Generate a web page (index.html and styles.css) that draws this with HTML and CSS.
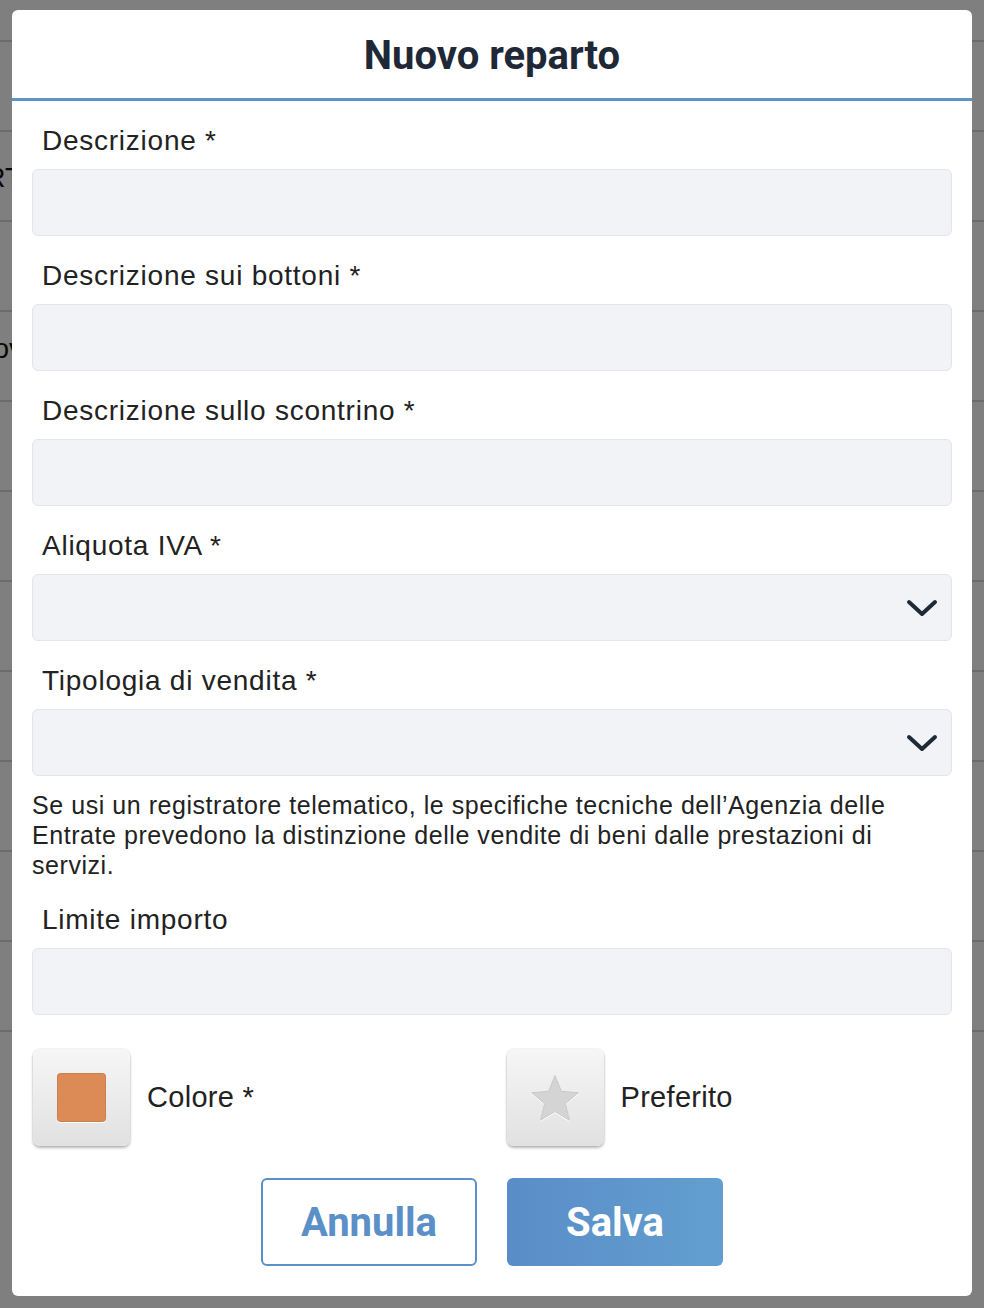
FILE: index.html
```html
<!DOCTYPE html>
<html lang="it">
<head>
<meta charset="utf-8">
<title>Nuovo reparto</title>
<link rel="stylesheet" href="styles.css">
</head>
<body>
<div class="page">
  <div class="page-head"></div>
  <div class="page-row"></div>
  <div class="page-row"><div class="cell cell-rt"><span>REPORT</span></div></div>
  <div class="page-row"></div>
  <div class="page-row"><div class="cell cell-ov"><span>Nuov</span></div></div>
  <div class="page-row"></div>
  <div class="page-row"></div>
  <div class="page-row"></div>
  <div class="page-row"></div>
  <div class="page-row"></div>
  <div class="page-row"></div>
  <div class="page-row"></div>
</div>

<div class="overlay">
  <div class="modal">
    <div class="modal-head"><h1 class="modal-title">Nuovo reparto</h1></div>
    <div class="modal-body">
      <div class="field">
        <label class="label">Descrizione *</label>
        <div class="input"></div>
      </div>
      <div class="field">
        <label class="label">Descrizione sui bottoni *</label>
        <div class="input"></div>
      </div>
      <div class="field">
        <label class="label">Descrizione sullo scontrino *</label>
        <div class="input"></div>
      </div>
      <div class="field">
        <label class="label">Aliquota IVA *</label>
        <div class="input select">
          <svg class="chevron" width="32" height="18" viewBox="0 0 32 18"><polyline points="3,3 16,15 29,3" fill="none" stroke="#1f2a37" stroke-width="4" stroke-linecap="round" stroke-linejoin="round"/></svg>
        </div>
      </div>
      <div class="field">
        <label class="label">Tipologia di vendita *</label>
        <div class="input select">
          <svg class="chevron" width="32" height="18" viewBox="0 0 32 18"><polyline points="3,3 16,15 29,3" fill="none" stroke="#1f2a37" stroke-width="4" stroke-linecap="round" stroke-linejoin="round"/></svg>
        </div>
      </div>
      <p class="help">Se usi un registratore telematico, le specifiche tecniche dell’Agenzia delle Entrate prevedono la distinzione delle vendite di beni dalle prestazioni di servizi.</p>
      <div class="field">
        <label class="label">Limite importo</label>
        <div class="input"></div>
      </div>
      <div class="options">
        <div class="option">
          <div class="opt-btn"><span class="swatch"></span></div>
          <span class="opt-label">Colore *</span>
        </div>
        <div class="option">
          <div class="opt-btn">
            <svg class="star" width="50" height="50" viewBox="0 0 48 48"><path d="M24 2.5 L30.2 17.6 L46.5 18.9 L34.1 29.6 L37.9 45.5 L24 37 L10.1 45.5 L13.9 29.6 L1.5 18.9 L17.8 17.6 Z" fill="#d4d4d4" stroke="#c4c4c4" stroke-width="0.8" stroke-linejoin="round"/></svg>
          </div>
          <span class="opt-label">Preferito</span>
        </div>
      </div>
      <div class="actions">
        <button class="btn btn-outline">Annulla</button>
        <button class="btn btn-primary">Salva</button>
      </div>
    </div>
  </div>
</div>
</body>
</html>
```

FILE: styles.css
```css
* { box-sizing: border-box; }

html, body {
  margin: 0;
  padding: 0;
}

body {
  background: #ffffff;
  font-family: "Liberation Sans", Arial, sans-serif;
  color: #222222;
  overflow: hidden;
  height: 1308px;
}

/* underlying page */
.page {
  display: flex;
  flex-direction: column;
}
.page-head {
  height: 42px;
  border-bottom: 2px solid #d6d6d6;
}
.page-row {
  height: 90px;
  border-bottom: 2px solid #d6d6d6;
  display: flex;
  align-items: center;
}
.cell {
  display: flex;
  justify-content: flex-end;
  white-space: nowrap;
  color: #111;
  font-size: 28px;
}
.cell-rt { width: 22px; padding-top: 4px; }
.cell-ov { width: 23px; margin-top: -14px; }

/* overlay + modal */
.overlay {
  position: fixed;
  inset: 0;
  background: rgba(0, 0, 0, 0.5);
  padding: 10px 12px 12px 12px;
}
.modal {
  background: #ffffff;
  border-radius: 6px;
  height: 1286px;
  display: flex;
  flex-direction: column;
}
.modal-head {
  height: 91px;
  padding-top: 4px;
  border-bottom: 3px solid #5b95ca;
  display: flex;
  align-items: center;
  justify-content: center;
}
.modal-title {
  margin: 0;
  font-family: Roboto, "Liberation Sans", sans-serif;
  font-weight: 700;
  font-size: 40px;
  color: #1e2836;
  line-height: 1;
}

.modal-body {
  padding: 0 20px 30px 20px;
  display: flex;
  flex-direction: column;
}

.field {
  display: flex;
  flex-direction: column;
}
.label {
  display: block;
  padding: 25px 0 0 10px;
  margin-bottom: 13px;
  font-size: 28px;
  letter-spacing: 0.75px;
  line-height: 30px;
  color: #222;
}
.input {
  height: 67px;
  background: #f2f3f7;
  border: 1px solid #e3e5ea;
  border-radius: 6px;
}
.select {
  display: flex;
  align-items: center;
  justify-content: flex-end;
  padding-right: 13px;
}
.chevron { display: block; }

.help {
  margin: 14px 0 0 0;
  font-size: 25px;
  letter-spacing: 0.55px;
  line-height: 30px;
  color: #222;
}

.options {
  margin-top: 34px;
  display: grid;
  grid-template-columns: 1fr 1fr;
  column-gap: 27px;
}
.option {
  display: flex;
  align-items: center;
  gap: 17px;
}
.opt-btn {
  width: 97px;
  height: 97px;
  margin-left: 1px;
  border-radius: 7px;
  background: linear-gradient(#f6f6f6, #e1e1e1);
  box-shadow: 0 2px 3px rgba(0, 0, 0, 0.28), 0 0 0 1px rgba(0, 0, 0, 0.04);
  display: flex;
  align-items: center;
  justify-content: center;
}
.swatch {
  width: 49px;
  height: 49px;
  background: #dc8a56;
  border-radius: 4px;
  border: 1px solid rgba(0, 0, 0, 0.08);
  box-shadow: 0 1px 0 #ffffff;
}
.star {
  display: block;
  filter: drop-shadow(0 1px 0 #ffffff);
}
.opt-label {
  font-size: 29px;
  letter-spacing: 0.3px;
  color: #222;
}

.actions {
  margin-top: 32px;
  display: flex;
  justify-content: center;
  gap: 30px;
}
.btn {
  width: 216px;
  height: 88px;
  border-radius: 6px;
  font-family: Roboto, "Liberation Sans", sans-serif;
  font-weight: 700;
  font-size: 40px;
  cursor: pointer;
  padding: 0;
}
.btn-outline {
  background: #ffffff;
  border: 2px solid #5b8fc7;
  color: #5b8fc7;
}
.btn-primary {
  background: linear-gradient(90deg, #5a8dc7, #629fd0);
  border: none;
  color: #ffffff;
}
```
